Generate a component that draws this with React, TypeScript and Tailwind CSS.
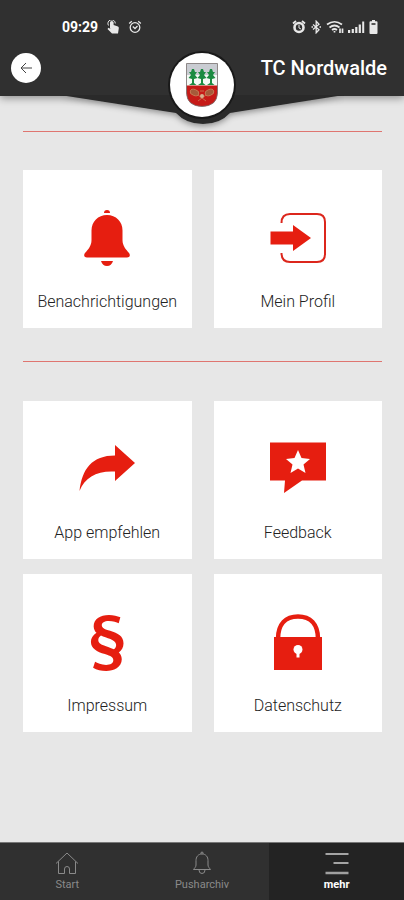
import { useState } from "react";
import type { ReactNode } from "react";
import clsx from "clsx";

interface Tile {
  label: string;
  icon: ReactNode;
}

const notificationIcon = (
  <svg viewBox="0 0 56 56" className="h-14 w-14" fill="#e61e10" aria-hidden="true">
    <path d="M25 3 Q25 0 28 0 Q31 0 31 3 Z" />
    <path d="M28 5 C19 5 12.500 11.500 12.500 20.500 V30 C12.500 36 9 39.500 6 43 C4.500 45 5 47.500 8 47.500 H48 C51 47.500 51.500 45 50 43 C47 39.500 43.500 36 43.500 30 V20.500 C43.500 11.500 37 5 28 5 Z" />
    <path d="M22 51 H34 Q32.500 56 28 56 Q23.500 56 22 51 Z" />
  </svg>
);

const profileIcon = (
  <svg viewBox="0 0 56 56" className="h-14 w-14" aria-hidden="true">
    <path
      d="M11.500 13 C11.500 7 15 4 20 4 H47 Q55 4 55 12 V44 Q55 52 47 52 H20 C15 52 11.500 49 11.500 43"
      fill="none"
      stroke="#dc261c"
      strokeWidth="2"
    />
    <path d="M0.500 21.500 H23 V15 L41 28 L23 41 V34.500 H0.500 Z" fill="#e61e10" />
  </svg>
);

const shareIcon = (
  <svg viewBox="0 0 56 56" className="h-14 w-14" fill="#e61e10" aria-hidden="true">
    <path d="M0.500 50 C3 28 13 14.500 36 14.500 V4 L56 22 L36 40 V30.500 C18 29.500 6 36 0.500 50 Z" />
  </svg>
);

const feedbackIcon = (
  <svg viewBox="0 0 56 56" className="h-14 w-14" aria-hidden="true">
    <path d="M0 1.500 H56 V39.500 H32 L14 52 L15 39.500 H0 Z" fill="#e61e10" />
    <path
      d="M28 9 L31.500 17 L40 18 L33.500 23.500 L35.500 32 L28 27.500 L20.500 32 L22.500 23.500 L16 18 L24.500 17 Z"
      fill="#fff"
    />
  </svg>
);

const imprintIcon = (
  <span
    className="block h-14 font-['Noto_Sans_CJK_SC',sans-serif] text-[64px] leading-[46px] font-bold text-[#e61e10]"
    aria-hidden="true"
  >
    §
  </span>
);

const privacyIcon = (
  <svg viewBox="0 0 56 56" className="h-14 w-14" aria-hidden="true">
    <path d="M8 25 C8 10 16 2.500 28 2.500 S48 10 48 25" fill="none" stroke="#e61e10" strokeWidth="4.500" />
    <path d="M4 23 H52 V56 H4 Z" fill="#e61e10" />
    <circle cx="28" cy="35.500" r="4.500" fill="#fff" />
    <path d="M26.500 37 H29.500 V43.500 H26.500 Z" fill="#fff" />
  </svg>
);

const accountTiles: Tile[] = [
  { label: "Benachrichtigungen", icon: notificationIcon },
  { label: "Mein Profil", icon: profileIcon },
];

const infoTiles: Tile[] = [
  { label: "App empfehlen", icon: shareIcon },
  { label: "Feedback", icon: feedbackIcon },
  { label: "Impressum", icon: imprintIcon },
  { label: "Datenschutz", icon: privacyIcon },
];

const tabs: Tile[] = [
  {
    label: "Start",
    icon: (
      <svg viewBox="0 0 24 24" className="h-6 w-6" fill="none" stroke="currentColor" aria-hidden="true">
        <path d="M1 12.500 L12 2 L23 12.500 M3.500 10.500 V22.500 H9.500 V18 Q9.500 15.500 12 15.500 Q14.500 15.500 14.500 18 V22.500 H20.500 V10.500" />
      </svg>
    ),
  },
  {
    label: "Pusharchiv",
    icon: (
      <svg viewBox="0 0 24 24" className="h-6 w-6" fill="none" stroke="currentColor" aria-hidden="true">
        <path d="M12 3 C8 3 6 6 6 9.500 V14 C6 16 4.500 17 3.500 18.500 H20.500 C19.500 17 18 16 18 14 V9.500 C18 6 16 3 12 3 Z" />
        <path d="M11 3 Q10.500 1 12 1 Q13.500 1 13 3 M9 19 Q9 22.500 12 22.500 Q15 22.500 15 19" />
      </svg>
    ),
  },
  {
    label: "mehr",
    icon: (
      <svg viewBox="0 0 24 24" className="h-6 w-6" fill="none" stroke="#d0d0d0" strokeWidth="1.500" aria-hidden="true">
        <path d="M0.500 3 H23.500 M8.500 12 H23.500" />
        <path d="M0.500 22 H23.500" stroke="#a0a0a0" strokeWidth="2.500" />
      </svg>
    ),
  },
];

function StatusBar() {
  return (
    <div className="flex h-[52px] items-center justify-between pt-px pr-[26px] pl-[62px] text-[#e8e8e8]">
      <div className="flex items-center gap-2">
        <span className="text-sm font-bold text-white">09:29</span>
        <svg viewBox="0 0 14 14" className="h-3.5 w-3.5" fill="currentColor" aria-hidden="true">
          <path d="M4 8 V2.500 Q4 1 5.800 1 Q7.600 1 7.600 2.500 V5 L12 6.500 Q13 7 12.800 8.200 L12 13.500 H6 L1.500 9 L2.500 7.800 L4.500 9 Z" />
          <path d="M2.500 5.500 A3.700 3.700 0 1 1 9.300 3.500" fill="none" stroke="currentColor" strokeWidth="1" />
        </svg>
        <svg viewBox="0 0 14 14" className="h-3.5 w-3.5" fill="none" stroke="currentColor" strokeWidth="1.300" aria-hidden="true">
          <circle cx="7" cy="7.500" r="4.800" />
          <path d="M1.200 3.500 L3.800 1.200 M12.800 3.500 L10.200 1.200 M4.800 6.500 L7 8.500 L9.500 6" />
        </svg>
      </div>
      <div className="flex items-center gap-1">
        <svg viewBox="0 0 14 14" className="h-3.5 w-3.5" fill="none" stroke="currentColor" strokeWidth="2.600" aria-hidden="true">
          <circle cx="7" cy="7.500" r="4.500" />
          <path d="M1 3.500 L4 1 M13 3.500 L10 1" strokeWidth="1.800" />
          <path d="M7 5 V8 L9 9" strokeWidth="1" />
        </svg>
        <svg viewBox="0 0 12 14" className="h-3.5 w-3" fill="none" stroke="currentColor" strokeWidth="1.300" aria-hidden="true">
          <path d="M3 4.500 L9 9.800 L6.200 12.800 V1.200 L9 4.200 L3 9.500" />
          <path d="M1.500 7 H3 M9.500 7 H11" />
        </svg>
        <svg viewBox="0 0 18 14" className="h-3.5 w-[18px]" fill="none" stroke="currentColor" strokeWidth="1.700" aria-hidden="true">
          <path d="M1 4.500 Q8.500 -1 16 4.500 M3.500 7.500 Q8.500 3.500 13.500 7.500 M6 10 Q8.500 8 11 10" />
          <path d="M8.500 11 V12.500 M14 8.500 V13 M16.500 8.500 V13" />
        </svg>
        <svg viewBox="0 0 17 14" className="h-3.5 w-[17px]" fill="currentColor" aria-hidden="true">
          <path d="M0 10 H2.200 V13 H0 Z M3.700 9 H5.900 V13 H3.700 Z M7.200 7 H9.400 V13 H7.200 Z M10.700 4.500 H12.900 V13 H10.700 Z M14.200 1.500 H16.200 V13 H14.200 Z" />
        </svg>
        <svg viewBox="0 0 9 14" className="h-3.5 w-[9px]" fill="currentColor" aria-hidden="true">
          <path d="M3 0 H6 V1.200 H7.500 Q8.500 1.200 8.500 2.200 V13 Q8.500 14 7.500 14 H1.500 Q0.500 14 0.500 13 V2.200 Q0.500 1.200 1.500 1.200 H3 Z" />
          <path d="M2.500 3 H6.500 V5 H2.500 Z" fill="#555" />
        </svg>
      </div>
    </div>
  );
}

function Crest() {
  return (
    <svg viewBox="0 0 32 44" className="h-11 w-8" role="img" aria-label="TC Nordwalde">
      <path d="M0.500 0.500 H31.500 V30 Q31 43 16 43.500 Q1 43 0.500 30 Z" fill="#c9ccd2" />
      <path d="M1 12 H31 V23 H1 Z" fill="#f4faf5" />
      <path d="M0.500 22.500 H31.500 V30 Q31 43 16 43.500 Q1 43 0.500 30 Z" fill="#c61a17" />
      <g fill="#1c8b42">
        <path d="M6 6 H8 L9 9 L11 9 L9 12 L11.500 15 L8 16 V20 L10.500 22 H3 L6 20 V16 L2.500 15 L5 12 L3 9 L5 9 Z" />
        <path d="M15 6 H17 L18 9 L20 9 L18 12 L20.500 15 L17 16 V20 L19.500 22 H12 L15 20 V16 L11.500 15 L14 12 L12 9 L14 9 Z" />
        <path d="M24 6 H26 L27 9 L29 9 L27 12 L29.500 15 L26 16 V20 L28.500 22 H21 L24 20 V16 L20.500 15 L23 12 L21 9 L23 9 Z" />
      </g>
      <g fill="#a55a3a" stroke="#c98058" strokeWidth="0.800">
        <ellipse cx="8.500" cy="29.500" rx="4.500" ry="3" transform="rotate(20 8.500 29.500)" />
        <ellipse cx="23.500" cy="29.500" rx="4.500" ry="3" transform="rotate(-20 23.500 29.500)" />
        <path d="M12 32 L20 38 M20 32 L12 38 M14 28 H18" fill="none" />
      </g>
      <circle cx="16" cy="33" r="2" fill="#d9b18f" />
      <path d="M0.500 0.500 H31.500 V30 Q31 43 16 43.500 Q1 43 0.500 30 Z" fill="none" stroke="#77706e" strokeWidth="0.800" />
    </svg>
  );
}

function Header() {
  return (
    <header className="relative z-10 h-24 bg-[#303030] shadow-[0_2px_8px_rgba(0,0,0,0.4)]">
      <StatusBar />
      <div className="flex h-8 items-center justify-between pr-[17px] pl-[11px]">
        <button
          type="button"
          aria-label="Zurück"
          className="flex h-[30px] w-[30px] items-center justify-center rounded-full bg-white text-[#444]"
        >
          <svg viewBox="0 0 12 12" className="h-3 w-3" fill="none" stroke="currentColor" aria-hidden="true">
            <path d="M12 6 H1 M6 1 L1 6 L6 11" />
          </svg>
        </button>
        <h1 className="text-xl font-medium text-white">TC Nordwalde</h1>
      </div>

      {/* Wedge that carries the club badge */}
      <svg
        viewBox="0 0 284 40"
        className="absolute top-[95px] left-1/2 h-10 w-[284px] -translate-x-1/2"
        aria-hidden="true"
      >
        <defs>
          <filter id="wedge-shadow" x="-10%" y="-20%" width="120%" height="160%">
            <feDropShadow dx="0" dy="2" stdDeviation="3" floodOpacity="0.4" />
          </filter>
        </defs>
        <path
          d="M0 0 L116 18 Q126 29 143 29 Q160 29 170 18 L284 0 Z"
          fill="#2b2b2b"
          filter="url(#wedge-shadow)"
        />
      </svg>
      <div className="absolute top-[53px] left-1/2 flex h-16 w-16 -translate-x-1/2 items-center justify-center rounded-full bg-white shadow-[0_0_0_2px_#191919]">
        <Crest />
      </div>
    </header>
  );
}

function TileGrid({ tiles }: { tiles: Tile[] }) {
  return (
    <div className="grid grid-cols-2 gap-x-[22px] gap-y-[15px]">
      {tiles.map((tile) => (
        <button
          key={tile.label}
          type="button"
          className="flex flex-col items-center gap-6 bg-white pt-10 pb-3.5 text-base font-light text-[#222]"
        >
          {tile.icon}
          <span>{tile.label}</span>
        </button>
      ))}
    </div>
  );
}

export default function App() {
  const [active, setActive] = useState("mehr");

  return (
    <div className="flex min-h-screen flex-col bg-[#e7e7e7] font-[Roboto,sans-serif]">
      <Header />

      <main className="flex-1 pt-[35px] pr-[22px] pb-6 pl-[23px]">
        <hr className="mb-[38px] border-[#df7570]" />
        <TileGrid tiles={accountTiles} />
        <hr className="mt-[33px] mb-[39px] border-[#df7570]" />
        <TileGrid tiles={infoTiles} />
      </main>

      <nav className="grid grid-cols-3 border-t border-[#777] bg-[#303030]">
        {tabs.map((tab) => (
          <button
            key={tab.label}
            type="button"
            onClick={() => setActive(tab.label)}
            className={clsx(
              "flex flex-col items-center gap-0.5 pt-2 pb-[7px] text-[11px] leading-4",
              active === tab.label ? "bg-[#232323] font-bold text-white" : "text-[#8a8a8a]"
            )}
          >
            {tab.icon}
            <span>{tab.label}</span>
          </button>
        ))}
      </nav>
    </div>
  );
}
